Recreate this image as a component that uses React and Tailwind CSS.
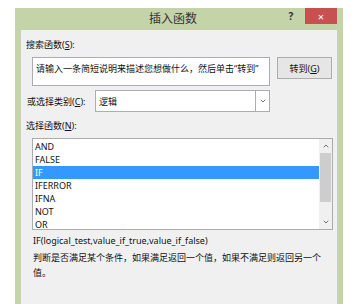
import { ChevronDown, ChevronUp } from 'lucide-react'

const FUNCTIONS = ['AND', 'FALSE', 'IF', 'IFERROR', 'IFNA', 'NOT', 'OR']
const SELECTED = 'IF'

function Key({ children }) {
  return <span className="underline underline-offset-1">{children}</span>
}

function App() {
  return (
    <div
      className="w-[353px] h-[304px] bg-white overflow-hidden pt-[8px] pl-[15px] text-[#111]"
      style={{ fontFamily: '"Noto Sans", "Noto Sans CJK SC", sans-serif' }}
    >
      <div className="w-[328px] h-[296px] bg-[#c4d3a8] flex flex-col">
        {/* title bar */}
        <div className="h-[22px] flex items-start">
          <div className="flex-1 h-[22px] flex items-center justify-center pl-[48px] text-[12px] text-[#333] leading-none">
            插入函数
          </div>
          <div className="w-[16px] h-[16px] flex items-center justify-center text-[10px] font-bold text-[#333] mr-[6px]">
            ?
          </div>
          <div className="w-[32px] h-[16px] bg-[#c75050] flex items-center justify-center text-white text-[11px] leading-none mr-[6px]">
            ×
          </div>
        </div>

        {/* content */}
        <div className="flex-1 mx-[6px] bg-[#f0f0f0] text-[9px] leading-none">
          <div className="pl-[5px] pt-[10px] h-[27px]">
            搜索函数(<Key>S</Key>):
          </div>

          <div className="flex items-start">
            <div className="ml-[11px] w-[238px] h-[29px] bg-white border border-[#abadb3] px-[3px] pt-[6px] whitespace-nowrap">
              请输入一条简短说明来描述您想做什么，然后单击“转到”
            </div>
            <div className="ml-[7px] w-[55px] h-[22px] bg-[#e6e6e6] border border-[#adadad] flex items-center justify-center">
              转到(<Key>G</Key>)
            </div>
          </div>

          <div className="flex items-center mt-[4px] h-[22px]">
            <div className="pl-[6px] w-[74px]">
              或选择类别(<Key>C</Key>):
            </div>
            <div className="w-[175px] h-[22px] bg-white border border-[#abadb3] flex items-center">
              <div className="flex-1 pl-[3px]">逻辑</div>
              <div className="w-[14px] h-full border-l border-[#abadb3] flex items-center justify-center text-[#555]">
                <ChevronDown size={8} strokeWidth={2.5} />
              </div>
            </div>
          </div>

          <div className="pl-[5px] pt-[9px] h-[26px]">
            选择函数(<Key>N</Key>):
          </div>

          <div className="ml-[11px] w-[301px] h-[92px] bg-white border border-[#acacac] flex">
            <div className="flex-1 pt-[1px]">
              {FUNCTIONS.map((name) => (
                <div
                  key={name}
                  className={
                    name === SELECTED
                      ? 'h-[13px] pl-[2px] flex items-center bg-[#3399ff] text-white'
                      : 'h-[13px] pl-[2px] flex items-center'
                  }
                >
                  {name}
                </div>
              ))}
            </div>
            <div className="w-[13px] bg-[#f0f0f0] flex flex-col items-center">
              <div className="h-[14px] flex items-center justify-center text-[#555]">
                <ChevronUp size={8} strokeWidth={2.5} />
              </div>
              <div className="w-[11px] h-[49px] bg-[#cdcdcd]" />
              <div className="flex-1" />
              <div className="h-[14px] flex items-center justify-center text-[#555]">
                <ChevronDown size={8} strokeWidth={2.5} />
              </div>
            </div>
          </div>

          <div className="pl-[12px] pt-[6px] h-[20px]">
            IF(logical_test,value_if_true,value_if_false)
          </div>
          <div className="pl-[12px] w-[310px] leading-[15px]">
            判断是否满足某个条件，如果满足返回一个值，如果不满足则返回另一个值。
          </div>
        </div>
      </div>
    </div>
  )
}

export default App
